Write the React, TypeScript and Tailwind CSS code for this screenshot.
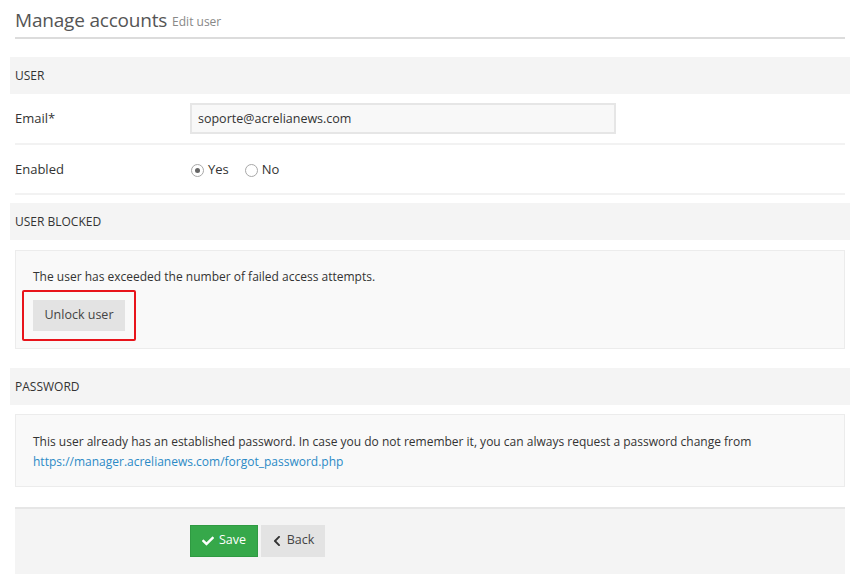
import React from "react";
import { FaCheck, FaChevronLeft } from "react-icons/fa";

function Radio({ checked, label, className }: { checked: boolean; label: string; className?: string }) {
  return (
    <label className={"flex items-center gap-[4px] " + (className || "")}>
      <span className="w-[13px] h-[13px] rounded-full border border-[#a8a8a8] bg-white flex items-center justify-center">
        {checked && <span className="w-[5px] h-[5px] rounded-full bg-[#666]" />}
      </span>
      <span className="text-[13px]">{label}</span>
    </label>
  );
}

function SectionBar({ title, className }: { title: string; className?: string }) {
  return (
    <div className={"h-[37px] bg-[#f4f4f4] flex items-center px-[5px] text-[12px] text-[#333] " + (className || "")}>
      {title}
    </div>
  );
}

export default function App() {
  return (
    <div className="w-[860px] h-[583px] bg-white font-['Open_Sans',sans-serif] text-[12px] text-[#333] overflow-hidden">
      <div className="mx-[15px] h-[39px] border-b-2 border-[#dcdcdc] flex items-end pb-[4px]">
        <span className="text-[19px] leading-[26px] text-[#555] tracking-[-0.2px]">Manage accounts</span>
        <span className="text-[12px] text-[#888] ml-[5px] mb-[2px]">Edit user</span>
      </div>
      <div className="px-[10px]">
        <SectionBar title="USER" className="mt-[18px]" />
        <div className="mx-[5px] h-[51px] border-b-2 border-[#f2f2f2] flex items-center">
          <div className="w-[175px] text-[13px] mt-[1px]">Email*</div>
          <div className="w-[426px] h-[31px] border-2 border-[#e6e6e6] bg-[#f8f8f8] flex items-center px-[6px] text-[12.5px] pt-[1px]">
            soporte@acrelianews.com
          </div>
        </div>
        <div className="mx-[5px] h-[50px] border-b-2 border-[#f2f2f2] flex items-center pt-[2px]">
          <div className="w-[176px] text-[13px]">Enabled</div>
          <Radio checked label="Yes" className="mr-[16px]" />
          <Radio checked={false} label="No" />
        </div>
        <SectionBar title="USER BLOCKED" className="mt-[8px] h-[36px]" />
        <div className="mx-[5px] mt-[10px] h-[99px] border border-[#ececec] bg-[#f9f9f9] px-[17px] pt-[17px]">
          <div className="leading-[18px]">The user has exceeded the number of failed access attempts.</div>
          <div className="mt-[4px] -ml-[11px] w-[114px] h-[51px] border-2 border-[#e8141b] rounded-[2px] flex items-center pl-[9px]">
            <div className="w-[92px] h-[31px] bg-[#e3e3e3] flex items-center justify-center text-[#444] text-[12.5px]">Unlock user</div>
          </div>
        </div>
        <SectionBar title="PASSWORD" className="mt-[19px]" />
        <div className="mx-[5px] mt-[9px] h-[73px] border border-[#ececec] bg-[#f9f9f9] px-[17px] pt-[17px] leading-[20px]">
          <div>This user already has an established password. In case you do not remember it, you can always request a password change from</div>
          <div className="text-[#2b8ac6]">https://manager.acrelianews.com/forgot_password.php</div>
        </div>
        <div className="mx-[5px] mt-[20px] h-[67px] border-t-2 border-[#e6e6e6] bg-[#f4f4f4] flex items-center pl-[175px] pb-[2px]">
          <div className="w-[68px] h-[32px] bg-[#36a84a] border border-[#2f9a42] text-white flex items-center justify-center gap-[5px] text-[12.5px]">
            <FaCheck className="w-[12px] h-[12px]" />
            <span>Save</span>
          </div>
          <div className="ml-[3px] w-[64px] h-[32px] bg-[#e3e3e3] text-[#444] flex items-center justify-center gap-[5px] text-[12.5px]">
            <FaChevronLeft className="w-[10px] h-[12px] text-[#333]" />
            <span>Back</span>
          </div>
        </div>
      </div>
    </div>
  );
}
